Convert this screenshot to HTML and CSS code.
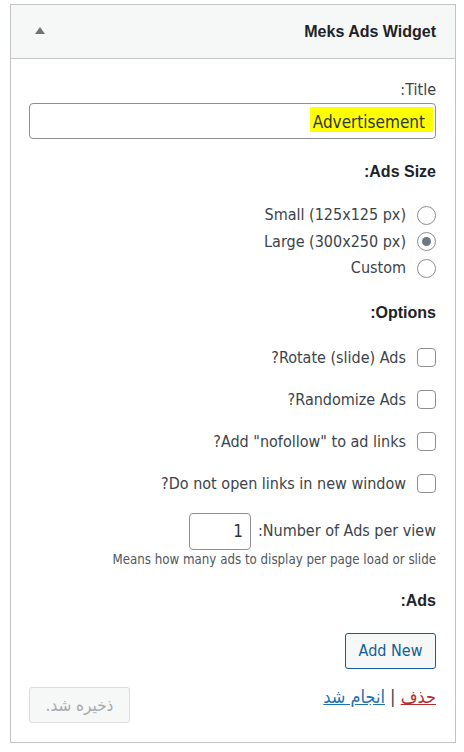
FILE: index.html
```html
<!DOCTYPE html>
<html lang="fa" dir="rtl">
<head>
<meta charset="utf-8">
<title>Meks Ads Widget</title>
<link rel="stylesheet" href="styles.css">
</head>
<body>
<div class="widget">
  <div class="widget-top">
    <h3 class="widget-title">Meks Ads Widget</h3>
    <span class="toggle-arrow" aria-hidden="true"></span>
  </div>
  <div class="widget-inside">
    <label class="field-label" for="w-title">Title:</label>
    <div class="text-input" id="w-title"><span class="marked">Advertisement</span></div>

    <h4 class="section-title">Ads Size:</h4>
    <div class="radio-list">
      <label class="choice"><input type="radio" name="size"><span dir="ltr">Small (125x125 px)</span></label>
      <label class="choice"><input type="radio" name="size" checked><span dir="ltr">Large (300x250 px)</span></label>
      <label class="choice"><input type="radio" name="size"><span>Custom</span></label>
    </div>

    <h4 class="section-title options-title">Options:</h4>
    <div class="check-list">
      <label class="choice"><input type="checkbox"><span>Rotate (slide) Ads?</span></label>
      <label class="choice"><input type="checkbox"><span>Randomize Ads?</span></label>
      <label class="choice"><input type="checkbox"><span>Add "nofollow" to ad links?</span></label>
      <label class="choice"><input type="checkbox"><span>Do not open links in new window?</span></label>
    </div>

    <div class="number-row">
      <label for="w-num">Number of Ads per view:</label>
      <input class="number-input" id="w-num" type="text" value="1">
    </div>
    <p class="description">Means how many ads to display per page load or slide</p>

    <h4 class="section-title">Ads:</h4>
    <div class="add-row"><button class="add-new" type="button">Add New</button></div>

    <div class="widget-control">
      <div class="control-links"><a class="link-delete" href="#">حذف</a> | <a class="link-done" href="#">انجام شد</a></div>
      <button class="save" type="button" disabled>ذخیره شد.</button>
    </div>
  </div>
</div>
</body>
</html>
```
FILE: styles.css
```css
html, body {
  margin: 0;
  background: #fff;
}
body {
  padding: 4px 8px 0 10px;
  font-family: "DejaVu Sans Condensed", "DejaVu Sans", sans-serif;
  font-stretch: condensed;
  font-size: 16px;
  color: #3c434a;
}
.widget {
  border: 1px solid #c3c4c7;
  background: #fff;
}
.widget-top {
  height: 53px;
  background: #f6f7f7;
  border-bottom: 1px solid #c3c4c7;
  display: flex;
  align-items: center;
  justify-content: space-between;
  padding: 0 19px 0 24px;
}
.widget-title {
  margin: 0;
  font: bold 16px/20px "Liberation Sans", Arial, sans-serif;
  color: #1d2327;
}
.toggle-arrow {
  width: 0;
  height: 0;
  border-left: 5px solid transparent;
  border-right: 5px solid transparent;
  border-bottom: 7px solid #6e7378;
  margin-top: -2px;
}
.widget-inside {
  padding: 21px 19px 19px 18px;
}
.field-label {
  display: block;
  line-height: 20px;
}
.text-input {
  margin-top: 3px;
  height: 34px;
  border: 1px solid #8c8f94;
  border-radius: 4px;
  display: flex;
  align-items: center;
  padding: 0 2px 0 8px;
  font-size: 17px;
  color: #2c3338;
}
.marked {
  background: #ffff00;
  line-height: 17px;
  padding: 7px 8px 1px 3px;
  margin-top: -3px;
}
.section-title {
  margin: 23px 0 0;
  font: bold 16px/20px "Liberation Sans", Arial, sans-serif;
  color: #1d2327;
}
.options-title {
  margin-top: 21.5px;
}
.radio-list {
  margin-top: 20px;
  display: flex;
  flex-direction: column;
}
.radio-list .choice {
  height: 26.5px;
}
.check-list {
  margin-top: 24.5px;
  display: flex;
  flex-direction: column;
  gap: 22px;
}
.check-list .choice {
  height: 20px;
}
.choice {
  display: flex;
  align-items: center;
  gap: 11px;
  line-height: 20px;
}
.choice input {
  appearance: none;
  -webkit-appearance: none;
  margin: 0;
  width: 19px;
  height: 19px;
  border: 1px solid #8c8f94;
  background: #fff;
  display: flex;
  align-items: center;
  justify-content: center;
  flex: none;
}
.choice input[type="radio"] {
  border-radius: 50%;
}
.choice input[type="checkbox"] {
  border-radius: 4px;
}
.choice input[type="radio"]:checked::before {
  content: "";
  width: 9px;
  height: 9px;
  border-radius: 50%;
  background: #6d7882;
}
.number-row {
  margin-top: 19px;
  display: flex;
  align-items: center;
  gap: 7px;
  line-height: 20px;
}
.number-input {
  box-sizing: border-box;
  width: 62px;
  height: 37px;
  margin: 0;
  border: 1px solid #8c8f94;
  border-radius: 4px;
  padding: 0 7px;
  font: inherit;
  font-size: 17px;
  color: #2c3338;
  text-align: right;
  background: #fff;
}
.description {
  margin: 2px 0 0;
  font-size: 13.2px;
  line-height: 16px;
  color: #50575e;
}
.add-row {
  margin-top: 22px;
}
.add-new {
  box-sizing: border-box;
  width: 91px;
  height: 36px;
  margin: 0;
  padding: 0;
  border: 1px solid #135e96;
  border-radius: 3px;
  background: #f6f7f7;
  color: #135e96;
  font: inherit;
  font-size: 16px;
}
.widget-control {
  margin-top: 18px;
  display: flex;
  justify-content: space-between;
  align-items: flex-start;
}
.control-links {
  line-height: 20px;
  font-size: 18px;
  color: #3c434a;
}
.link-delete {
  color: #b32d2e;
  text-decoration: underline;
}
.link-done {
  color: #2271b1;
  text-decoration: underline;
}
.save {
  box-sizing: border-box;
  width: 101px;
  height: 36px;
  margin: 0;
  border: 1px solid #dcdcde;
  border-radius: 3px;
  background: #f6f7f7;
  color: #a7aaad;
  font: inherit;
  font-size: 17px;
}
```
